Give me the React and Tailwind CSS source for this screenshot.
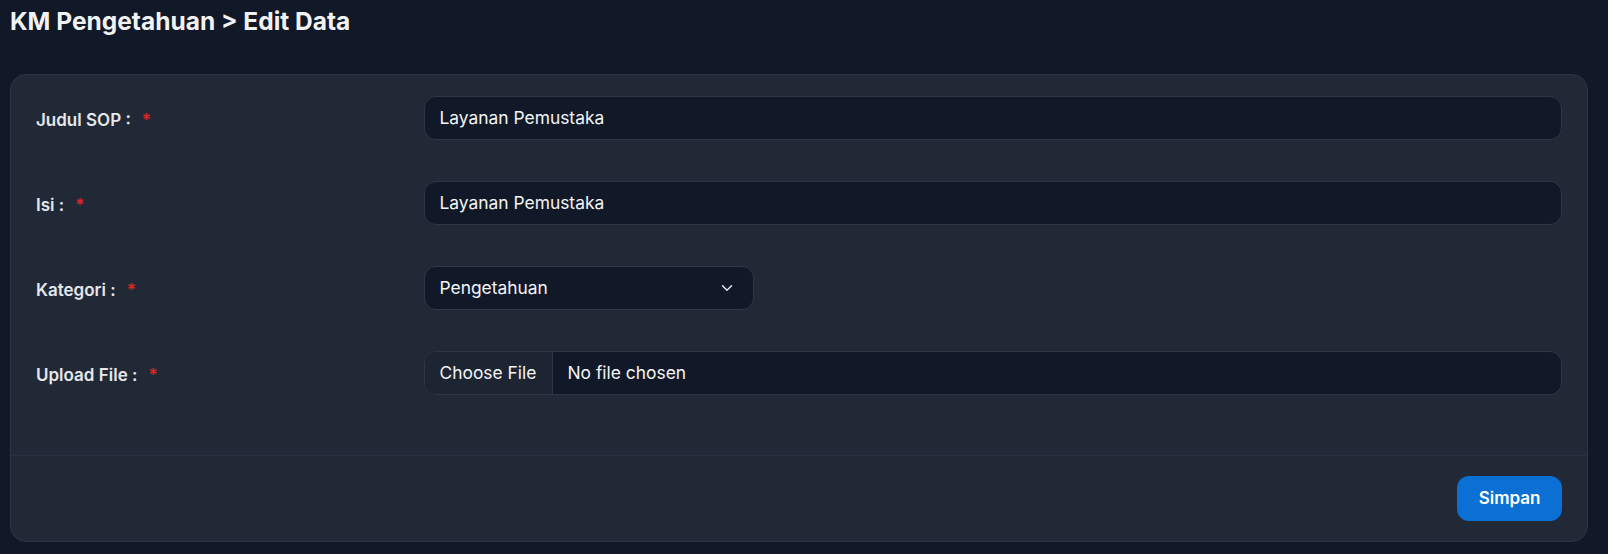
import { ChevronDown } from 'lucide-react';

// 入力欄の共通スタイル
const fieldBox =
  'h-[44px] w-full rounded-xl border border-[#2e3746] bg-[#111827] px-[15px] text-[17.4px] text-[#f3f4f6] flex items-center';

function Label({ children }) {
  return (
    <div className="flex items-center pt-[5px] text-[17px] font-semibold text-[#e5e7eb]">
      {children}
      <span className="ml-[11px] text-[#dc2626]">*</span>
    </div>
  );
}

function Row({ label, children }) {
  return (
    <div className="grid grid-cols-4 gap-6 items-center">
      <Label>{label}</Label>
      <div className="col-span-3">{children}</div>
    </div>
  );
}

export default function App() {
  return (
    <div
      className="min-h-screen bg-[#111827] pl-[10px] pr-[20px] pt-[6px] pb-[11px]"
      style={{ fontFamily: 'Inter, "Noto Sans", sans-serif' }}
    >
      <h1 className="text-[24.5px] font-bold leading-[30px] text-[#f1f2f4]">
        KM Pengetahuan &gt; Edit Data
      </h1>

      <div className="mt-[38px] rounded-2xl border border-[#2b3443] bg-[#212936]">
        {/* フォーム本体 */}
        <div className="flex flex-col gap-[41px] px-[25px] pt-[21px] pb-[60px]">
          <Row label="Judul SOP :">
            <div className={fieldBox}>Layanan Pemustaka</div>
          </Row>
          <Row label="Isi :">
            <div className={fieldBox}>Layanan Pemustaka</div>
          </Row>
          <Row label="Kategori :">
            <div className={`${fieldBox} justify-between pr-[17px]`} style={{ width: 330 }}>
              <span>Pengetahuan</span>
              <ChevronDown size={18} strokeWidth={2} className="text-[#e5e7eb]" />
            </div>
          </Row>
          <Row label="Upload File :">
            <div className="h-[44px] w-full rounded-xl border border-[#2e3746] bg-[#111827] flex items-stretch overflow-hidden text-[17.4px] text-[#f3f4f6]">
              <div className="w-[128px] shrink-0 bg-[#1d2432] border-r border-[#2e3746] flex items-center pl-[15px]">
                Choose File
              </div>
              <div className="flex items-center pl-[15px]">No file chosen</div>
            </div>
          </Row>
        </div>

        {/* フッター */}
        <div className="border-t border-[#283141] flex justify-end px-[25px] pt-[20px] pb-[20px]">
          <button className="h-[45px] w-[105px] rounded-xl bg-[#0b6fd3] text-[17px] font-semibold text-white">
            Simpan
          </button>
        </div>
      </div>
    </div>
  );
}
